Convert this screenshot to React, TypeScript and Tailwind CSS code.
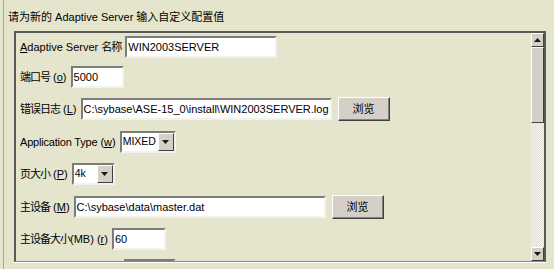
import React from 'react';

const Zh: React.FC<{ children: React.ReactNode }> = ({ children }) => (
  <span className="tracking-[-1px]">{children}</span>
);

const Label: React.FC<{ children: React.ReactNode }> = ({ children }) => (
  <span className="text-[11px] text-black whitespace-nowrap mr-[4px] leading-none">{children}</span>
);

const TextBox: React.FC<{ value: string; w: string }> = ({ value, w }) => (
  <div
    className={`${w} h-[22px] bg-white border-2 border-t-[#7c7c78] border-l-[#7c7c78] border-r-[#f3f3ee] border-b-[#f3f3ee] flex items-center pl-[1px] text-[11px] text-black whitespace-nowrap overflow-hidden`}
  >
    {value}
  </div>
);

const DownArrow: React.FC = () => (
  <svg width="7" height="4" viewBox="0 0 7 4">
    <polygon points="0,0 7,0 3.5,4" fill="#1a1a1a" />
  </svg>
);

const UpArrow: React.FC = () => (
  <svg width="7" height="4" viewBox="0 0 7 4">
    <polygon points="0,4 7,4 3.5,0" fill="#1a1a1a" />
  </svg>
);

const Combo: React.FC<{ value: string; w: string }> = ({ value, w }) => (
  <div
    className={`${w} h-[22px] bg-white border-2 border-t-[#7c7c78] border-l-[#7c7c78] border-r-[#f3f3ee] border-b-[#f3f3ee] flex items-center text-[10.5px] text-black`}
  >
    <span className="flex-1 pl-[1px] whitespace-nowrap">{value}</span>
    <div className="w-[16px] h-[18px] bg-[#d4d0c8] border border-t-white border-l-white border-r-[#404040] border-b-[#404040] flex items-center justify-center">
      <DownArrow />
    </div>
  </div>
);

const Browse: React.FC = () => (
  <div className="ml-[6px] w-[52px] h-[24px] bg-[#d4d0c8] border border-t-white border-l-white border-r-[#404040] border-b-[#404040] shadow-[inset_-1px_-1px_0_#808080] flex items-center justify-center text-[11px] text-black">
    浏览
  </div>
);

const Row: React.FC<{ mt: string; children: React.ReactNode }> = ({ mt, children }) => (
  <div className={`${mt} h-[22px] flex items-center`}>{children}</div>
);

const ScrollButton: React.FC<{ children: React.ReactNode }> = ({ children }) => (
  <div className="h-[14px] bg-[#d4d0c8] border border-t-white border-l-white border-r-[#404040] border-b-[#404040] flex items-center justify-center">
    {children}
  </div>
);

export default function App() {
  return (
    <div
      className="w-[554px] h-[269px] bg-[#e5e4cc] pl-[3px] overflow-hidden"
      style={{ fontFamily: "'Liberation Sans', 'Noto Sans CJK SC', sans-serif" }}
    >
      <div className="h-full border-l border-[#a9a89a] pl-[4px] pt-[10px]">
        <div className="h-[14px] flex items-center text-[11px] text-black whitespace-nowrap">
          请为新的 Adaptive Server 输入自定义配置值
        </div>

        <div className="ml-[6px] mt-[7px] w-[532px] h-[231px] flex border-t-2 border-l-2 border-r-2 border-b border-[#5a5a58] border-b-[#8a8a80] shadow-[0_1px_0_#ffffff]">
          <div className="flex-1 overflow-hidden pl-[4px] pt-[3px]">
            <Row mt="mt-0">
              <Label>
                <u>A</u>daptive Server <Zh>名称</Zh>
              </Label>
              <TextBox value="WIN2003SERVER" w="w-[152px]" />
            </Row>
            <Row mt="mt-[8px]">
              <Label>
                <Zh>端口号</Zh> (<u>o</u>)
              </Label>
              <TextBox value="5000" w="w-[53px]" />
            </Row>
            <Row mt="mt-[10px]">
              <Label>
                <Zh>错误日志</Zh> (<u>L</u>)
              </Label>
              <TextBox value="C:\sybase\ASE-15_0\install\WIN2003SERVER.log" w="w-[251px]" />
              <Browse />
            </Row>
            <Row mt="mt-[11px]">
              <Label>
                <span className="tracking-[-0.2px]">Application Type</span> (<u>w</u>)
              </Label>
              <Combo value="MIXED" w="w-[56px]" />
            </Row>
            <Row mt="mt-[10px]">
              <Label>
                <Zh>页大小</Zh> (<u>P</u>)
              </Label>
              <Combo value="4k" w="w-[43px]" />
            </Row>
            <Row mt="mt-[11px]">
              <Label>
                <Zh>主设备</Zh> (<u>M</u>)
              </Label>
              <TextBox value="C:\sybase\data\master.dat" w="w-[252px]" />
              <Browse />
            </Row>
            <Row mt="mt-[10px]">
              <Label>
                <Zh>主设备大小</Zh>(MB) (<u>r</u>)
              </Label>
              <TextBox value="60" w="w-[54px]" />
            </Row>
            <Row mt="mt-[9px]">
              <Label>
                <Zh>主数据库大小</Zh>(MB) (<u>d</u>)
              </Label>
              <TextBox value="26" w="w-[52px]" />
            </Row>
          </div>

          <div className="w-[13px] flex flex-col">
            <ScrollButton>
              <UpArrow />
            </ScrollButton>
            <div className="h-[76px] bg-[#d4d0c8] border border-t-white border-l-white border-r-[#404040] border-b-[#404040]" />
            <div className="flex-1 bg-[repeating-conic-gradient(#f4f3ee_0_25%,#e2e0d8_0_50%)] bg-[length:2px_2px]" />
            <ScrollButton>
              <DownArrow />
            </ScrollButton>
          </div>
        </div>
      </div>
    </div>
  );
}
